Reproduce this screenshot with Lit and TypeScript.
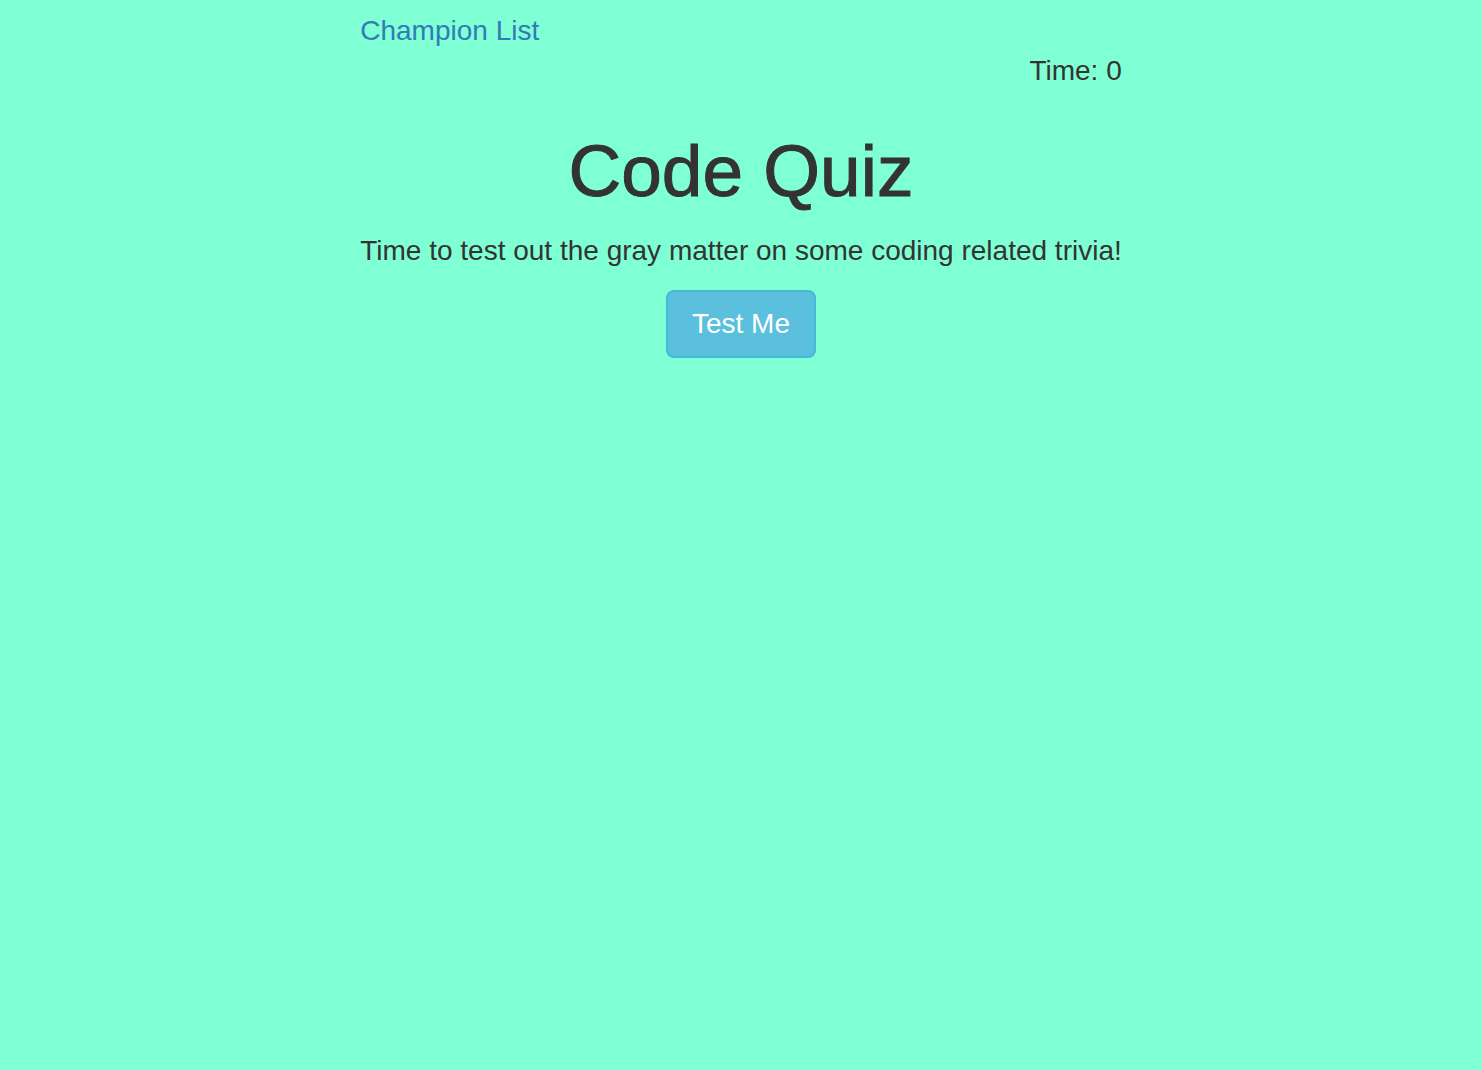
import { LitElement, html, css } from "lit";
import { customElement, state } from "lit/decorators.js";

@customElement("app-root")
export class AppRoot extends LitElement {
  static styles = css`
    :host {
      display: flex;
      justify-content: center;
      align-items: flex-start;
      box-sizing: border-box;
      min-height: 100vh;
      padding: 11px;
      background: #7fffd4;
      color: #333;
      font-family: "Liberation Sans", Arial, sans-serif;
      font-size: 28px;
      line-height: 40px;
    }
    .quiz {
      display: flex;
      flex-direction: column;
    }
    .champions {
      align-self: flex-start;
      color: #337ab7;
      text-decoration: none;
    }
    .timer {
      text-align: right;
    }
    /* The thin stroke gives the heading a medium weight. */
    .title {
      margin: 40px 0 20px;
      font-size: 73px;
      font-weight: 500;
      line-height: 80px;
      text-align: center;
      -webkit-text-stroke: 1px currentColor;
    }
    .intro {
      margin: 0 0 19px;
      text-align: center;
    }
    .start {
      align-self: center;
      padding: 12px 24px;
      border: 2px solid #46b8da;
      border-radius: 8px;
      background: #5bc0de;
      color: #fff;
      font: inherit;
      cursor: pointer;
    }
  `;

  @state() private time = 0;

  render() {
    return html`
      <main class="quiz">
        <a class="champions" href="#champions">Champion List</a>
        <div class="timer">Time: <span>${this.time}</span></div>
        <h1 class="title">Code Quiz</h1>
        <p class="intro">Time to test out the gray matter on some coding related trivia!</p>
        <button class="start" type="button">Test Me</button>
      </main>
    `;
  }
}
